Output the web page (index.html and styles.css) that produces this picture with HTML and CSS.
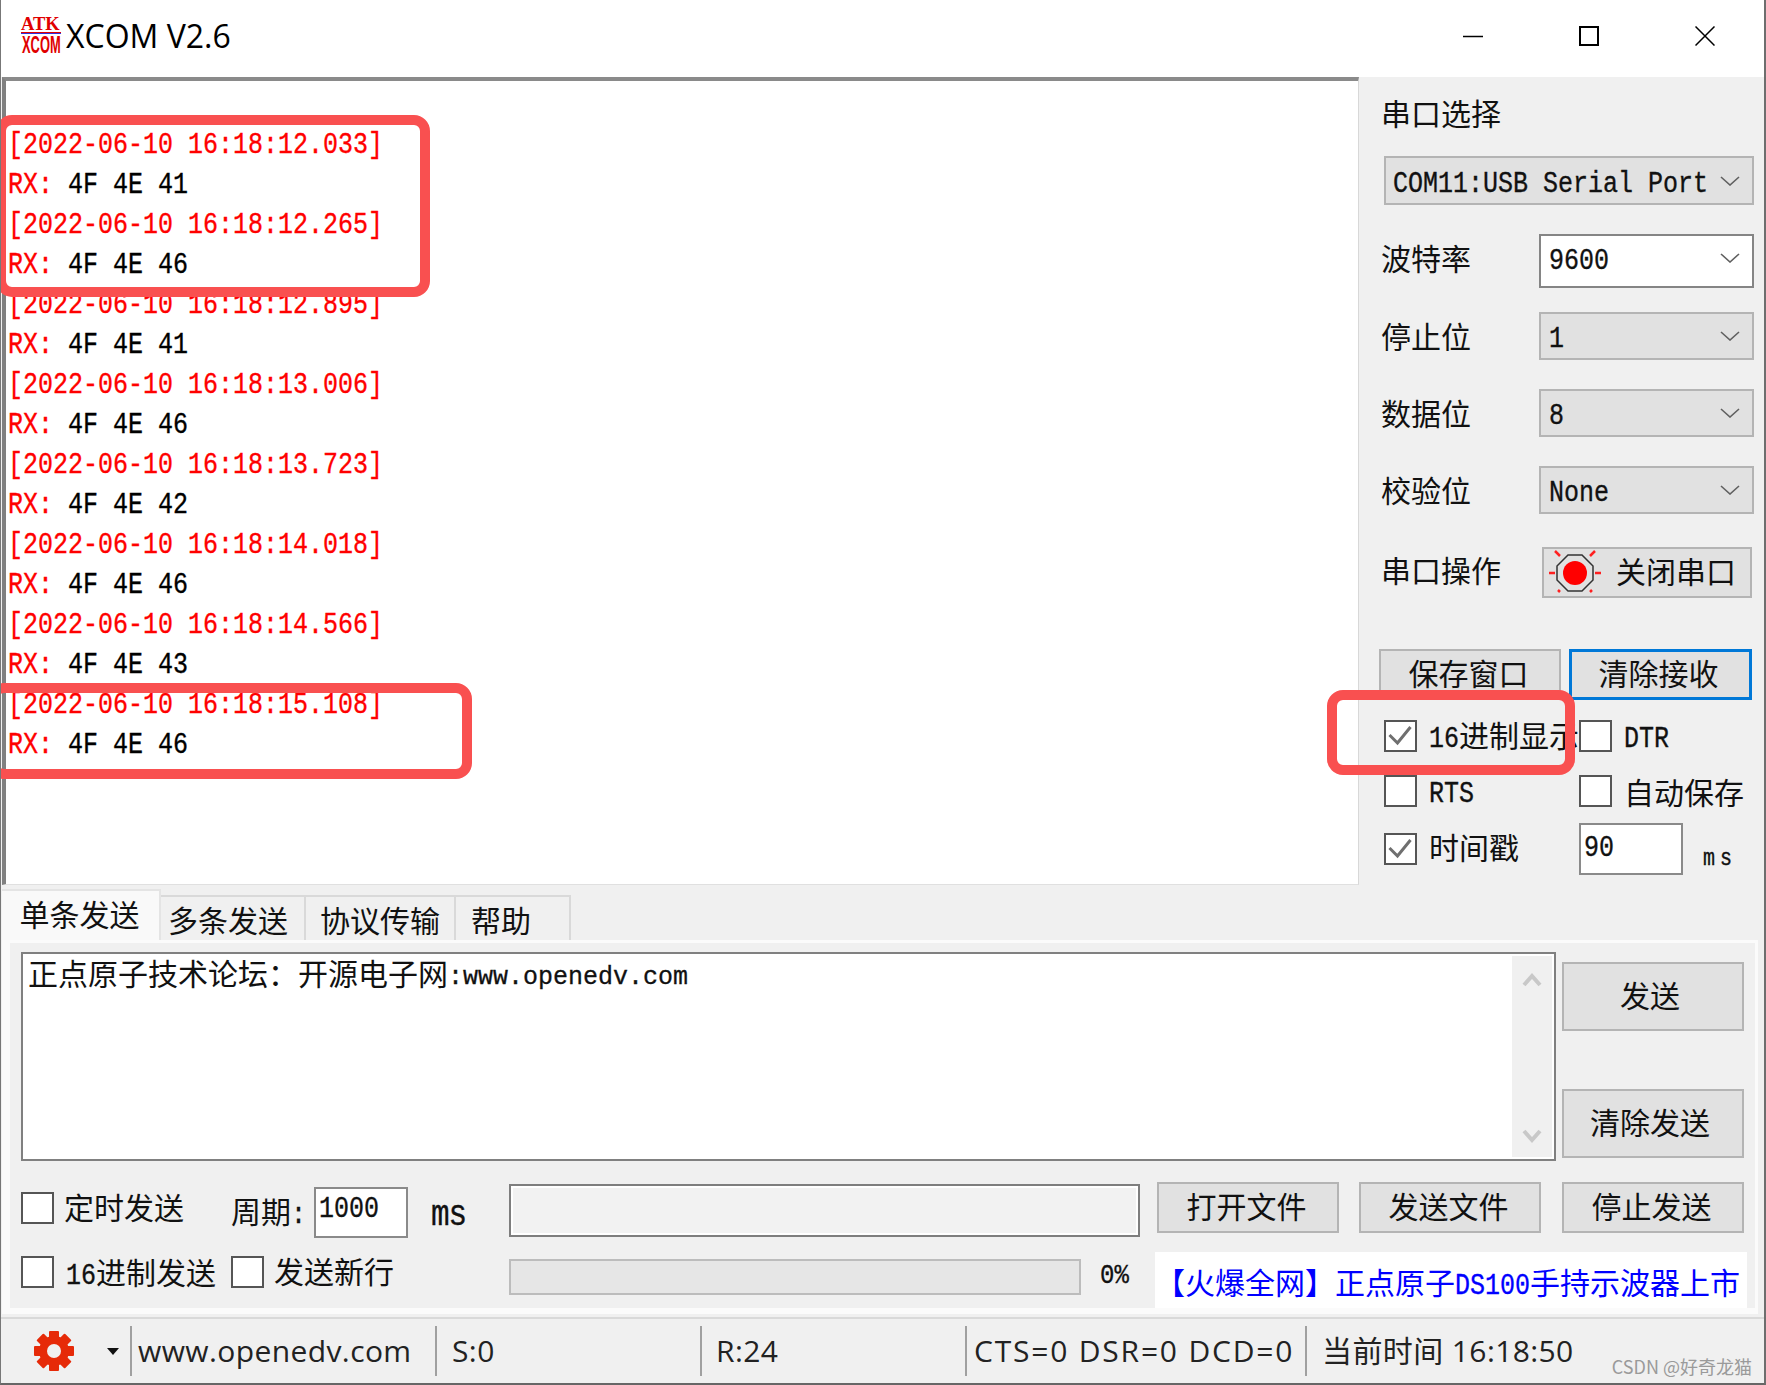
FILE: index.html
```html
<!DOCTYPE html>
<html lang="zh">
<head>
<meta charset="utf-8">
<title>XCOM V2.6</title>
<link rel="stylesheet" href="styles.css">
</head>
<body>
<div class="window">
  <header class="titlebar">
    <svg class="logo" width="42" height="44" viewBox="0 -3 42 44">
      <text x="1" y="13" class="logo-top">ATK</text>
      <rect x="1" y="15" width="40" height="1" fill="#e00000"/>
      <rect x="1" y="16" width="40" height="1" fill="#3030e0"/>
      <text transform="translate(2 36) scale(.68 1.25)" class="logo-bot">XCOM</text>
    </svg>
    <span class="app-title">XCOM V2.6</span>
    <div class="controls">
      <svg width="20" height="20" viewBox="0 0 20 20"><path d="M0 10.5H20" stroke="#000" stroke-width="1.5"/></svg>
      <svg width="20" height="20" viewBox="0 0 20 20"><rect x="1" y="1" width="18" height="18" fill="none" stroke="#000" stroke-width="2"/></svg>
      <svg width="20" height="20" viewBox="0 0 20 20"><path d="M.5.5L19.5 19.5M19.5.5L.5 19.5" stroke="#000" stroke-width="1.5"/></svg>
    </div>
  </header>

  <main class="main">
    <section class="log">
      <div class="line time">[2022-06-10 16:18:12.033]</div>
      <div class="line"><span class="red">RX:</span> 4F 4E 41</div>
      <div class="line time">[2022-06-10 16:18:12.265]</div>
      <div class="line"><span class="red">RX:</span> 4F 4E 46</div>
      <div class="line time">[2022-06-10 16:18:12.895]</div>
      <div class="line"><span class="red">RX:</span> 4F 4E 41</div>
      <div class="line time">[2022-06-10 16:18:13.006]</div>
      <div class="line"><span class="red">RX:</span> 4F 4E 46</div>
      <div class="line time">[2022-06-10 16:18:13.723]</div>
      <div class="line"><span class="red">RX:</span> 4F 4E 42</div>
      <div class="line time">[2022-06-10 16:18:14.018]</div>
      <div class="line"><span class="red">RX:</span> 4F 4E 46</div>
      <div class="line time">[2022-06-10 16:18:14.566]</div>
      <div class="line"><span class="red">RX:</span> 4F 4E 43</div>
      <div class="line time">[2022-06-10 16:18:15.108]</div>
      <div class="line"><span class="red">RX:</span> 4F 4E 46</div>
    </section>

    <aside class="panel">
      <div class="p-title">串口选择</div>
      <div class="select select-wide r-com"><span class="mono">COM11:USB Serial Port</span><svg class="chev" viewBox="0 0 20 10"><path d="M1 1L10 9L19 1"/></svg></div>

      <div class="field r-rate"><span class="field-label label-up">波特率</span>
        <div class="select select-white"><span class="mono">9600</span><svg class="chev" viewBox="0 0 20 10"><path d="M1 1L10 9L19 1"/></svg></div></div>
      <div class="field r-stop"><span class="field-label">停止位</span>
        <div class="select"><span class="mono">1</span><svg class="chev" viewBox="0 0 20 10"><path d="M1 1L10 9L19 1"/></svg></div></div>
      <div class="field r-data"><span class="field-label">数据位</span>
        <div class="select"><span class="mono">8</span><svg class="chev" viewBox="0 0 20 10"><path d="M1 1L10 9L19 1"/></svg></div></div>
      <div class="field r-parity"><span class="field-label">校验位</span>
        <div class="select"><span class="mono">None</span><svg class="chev" viewBox="0 0 20 10"><path d="M1 1L10 9L19 1"/></svg></div></div>

      <div class="field r-op"><span class="field-label label-op">串口操作</span>
        <button class="btn btn-led">
          <svg class="led" width="52" height="48" viewBox="0 0 52 48">
            <path d="M19 6H33L44 17V31L33 42H19L8 31V17Z" fill="none" stroke="#333" stroke-width="1.5"/>
            <circle cx="26" cy="24" r="12" fill="#ff0000"/>
            <path d="M0 24H6M46 24H52M6 2L11 7M46 2L41 7M9 41L11 43M43 41L41 43" stroke="#ff2020" stroke-width="2.5" fill="none"/>
          </svg>
          <span>关闭串口</span>
        </button>
      </div>

      <div class="btn-row">
        <button class="btn btn-save">保存窗口</button>
        <button class="btn btn-focus">清除接收</button>
      </div>

      <div class="chk-row r-c1">
        <span class="box"><svg viewBox="0 0 28 28"><path d="M3 13L11 21L24 5"/></svg></span>
        <span class="chk-label"><span class="mono">16</span>进制显示</span>
        <span class="box"></span>
        <span class="chk-label2"><span class="mono">DTR</span></span>
      </div>
      <div class="chk-row r-c2">
        <span class="box"></span>
        <span class="chk-label"><span class="mono">RTS</span></span>
        <span class="box"></span>
        <span class="chk-label2">自动保存</span>
      </div>
      <div class="chk-row r-c3">
        <span class="box"><svg viewBox="0 0 28 28"><path d="M3 13L11 21L24 5"/></svg></span>
        <span class="chk-label label-stamp">时间戳</span>
        <span class="input input-ms"><span class="mono">90</span></span>
        <span class="mono ms-small">ms</span>
      </div>
    </aside>
  </main>

  <nav class="tabs">
    <span class="tab tab-active">单条发送</span>
    <span class="tab t2">多条发送</span>
    <span class="tab t3">协议传输</span>
    <span class="tab t4">帮助</span>
  </nav>

  <section class="pane">
    <div class="send-top">
      <div class="textarea">
        <div class="ta-text">正点原子技术论坛：开源电子网<span class="mono">:www.openedv.com</span></div>
        <div class="scroll">
          <svg width="20" height="14" viewBox="0 0 20 14"><path d="M2 12L10 3L18 12"/></svg>
          <svg width="20" height="14" viewBox="0 0 20 14"><path d="M2 2L10 11L18 2"/></svg>
        </div>
      </div>
      <div class="side">
        <button class="btn btn-side">发送</button>
        <button class="btn btn-side">清除发送</button>
      </div>
    </div>

    <div class="row row2">
      <span class="box b-timer"></span>
      <span class="lbl l-timer">定时发送</span>
      <span class="lbl l-period">周期<span class="mono">:</span></span>
      <span class="input i-period"><span class="mono">1000</span></span>
      <span class="mono big-ms">ms</span>
      <span class="file"></span>
      <button class="btn btn-file b1">打开文件</button>
      <button class="btn btn-file b2">发送文件</button>
      <button class="btn btn-file b3">停止发送</button>
    </div>

    <div class="row row3">
      <span class="box b-hex"></span>
      <span class="lbl l-hex"><span class="mono">16</span>进制发送</span>
      <span class="box b-nl"></span>
      <span class="lbl l-nl">发送新行</span>
      <span class="progress"></span>
      <span class="mono pct">0%</span>
      <span class="ad">【火爆全网】正点原子<span class="mono">DS100</span>手持示波器上市</span>
    </div>
  </section>

  <footer class="status">
    <div class="cell c-gear">
      <svg class="gear" width="42" height="42" viewBox="0 0 42 42">
        <g fill="#e62a08">
          <circle cx="21" cy="21" r="15"/>
          <rect x="16" y="1" width="10" height="40" rx="1"/>
          <rect x="16" y="1" width="10" height="40" rx="1" transform="rotate(45 21 21)"/>
          <rect x="16" y="1" width="10" height="40" rx="1" transform="rotate(90 21 21)"/>
          <rect x="16" y="1" width="10" height="40" rx="1" transform="rotate(135 21 21)"/>
        </g>
        <circle cx="21" cy="21" r="7" fill="#f0f0f0"/>
      </svg>
      <svg class="caret" width="12" height="7" viewBox="0 0 12 7"><path d="M0 0H12L6 7Z" fill="#111"/></svg>
    </div>
    <i class="sep"></i>
    <div class="cell c-site">www.openedv.com</div>
    <i class="sep"></i>
    <div class="cell c-s">S:0</div>
    <i class="sep"></i>
    <div class="cell c-r">R:24</div>
    <i class="sep"></i>
    <div class="cell c-cts">CTS=0 DSR=0 DCD=0</div>
    <i class="sep"></i>
    <div class="cell c-time">当前时间 16:18:50</div>
  </footer>

  <div class="mark m1"></div>
  <div class="mark m2"></div>
  <div class="mark m3"></div>
  <div class="watermark">CSDN @好奇龙猫</div>
</div>
</body>
</html>
```
FILE: styles.css
```css
* { box-sizing: border-box; }
html, body { margin: 0; padding: 0; background: #fff; }
body { font-family: "Noto Sans CJK SC", "Noto Sans", sans-serif; font-size: 30px; line-height: 36px; color: #111; overflow: hidden; }

.window { position: relative; width: 1766px; height: 1385px; display: flex; flex-direction: column; background: #f0f0f0; border-left: 1px solid #777; border-right: 2px solid #6e6e6e; border-bottom: 2px solid #666; overflow: hidden; }

.mono { display: inline-block; font-family: "Liberation Mono", monospace; font-size: 25px; line-height: 30px; transform: translateY(4px) scaleY(1.18); white-space: pre; -webkit-text-stroke: .3px currentColor; }
.chk-label .mono, .chk-label2 .mono, .lbl .mono, .ad .mono { transform: translateY(-1px) scaleY(1.18); }

/* title bar */
.titlebar { height: 77px; flex: none; display: flex; align-items: center; background: #fff; padding: 0 49px 5px 19px; }
.logo { flex: none; }
.logo-top { font-family: "Liberation Serif", serif; font-weight: 700; font-size: 18.5px; fill: #e00000; }
.logo-bot { font-family: "Liberation Sans", sans-serif; font-weight: 700; font-size: 19px; fill: #e00000; }
.app-title { font-family: "Open Sans", sans-serif; font-size: 32px; line-height: 38px; margin-left: 4px; color: #000; }
.controls { margin-left: auto; display: flex; gap: 96px; }
.controls svg { display: block; }

/* main */
.main { height: 812px; flex: none; display: flex; }
.log { width: 1357px; height: 808px; margin-left: 1px; flex: none; background: #fff; border-left: 4px solid #808080; border-top: 4px solid #8a8a8a; border-right: 1px solid #d8d8d8; border-bottom: 1px solid #e0e0e0; padding: 45px 0 0 2px; overflow: hidden; }
.line { height: 40px; font-family: "Liberation Mono", monospace; font-size: 25px; line-height: 40px; color: #000; white-space: pre; transform: scaleY(1.18); -webkit-text-stroke: .3px currentColor; }
.time, .red { color: #ff0000; }

/* right panel */
.panel { flex: 1; padding-left: 22px; display: flex; flex-direction: column; background: #f0f0f0; margin-left: 3px; }
.p-title { margin-top: 17px; height: 36px; line-height: 36px; margin-left: -3px; }
.select { width: 215px; height: 48px; flex: none; display: flex; align-items: center; justify-content: space-between; padding: 0 12px 0 8px; background: #e1e1e1; border: 2px solid #b4b4b4; }
.select-wide { width: 370px; height: 49px; margin-top: 26px; padding-left: 7px; }
.select-white { height: 54px; background: #fff; border-color: #858585; padding-bottom: 6px; }
.chev { width: 20px; height: 10px; flex: none; }
.chev path { fill: none; stroke: #606060; stroke-width: 1.6; }
.field { display: flex; align-items: center; }
.field-label { width: 158px; margin: 0 0 2px -3px; flex: none; }
.label-up { margin-bottom: 9px; }
.label-op { margin-bottom: 7px; }
.r-rate { margin-top: 29px; }
.r-stop { margin-top: 24px; }
.r-data { margin-top: 29px; }
.r-parity { margin-top: 29px; }
.r-op { margin-top: 33px; }

button { font: inherit; color: inherit; padding: 0; cursor: default; }
.btn { display: flex; align-items: center; justify-content: center; background: #e1e1e1; border: 2px solid #b4b4b4; padding-bottom: 5px; }
.btn-led { width: 210px; height: 51px; margin-left: 3px; justify-content: flex-start; padding-left: 5px; gap: 15px; }
.led { flex: none; margin-bottom: -5px; }
.btn-row { display: flex; margin-top: 51px; margin-left: -5px; gap: 8px; }
.btn-save { width: 182px; height: 51px; padding-right: 3px; }
.btn-focus { width: 183px; height: 51px; border: 3px solid #0078d7; padding-right: 4px; }

.chk-row { display: flex; align-items: center; }
.box { width: 33px; height: 32px; flex: none; background: #fff; border: 2px solid #555; display: block; }
.box svg { display: block; width: 100%; height: 100%; }
.box path { fill: none; stroke: #6f6f6f; stroke-width: 3; }
.chk-label { width: 150px; margin-left: 12px; flex: none; white-space: nowrap; }
.label-stamp { margin-bottom: 6px; }
.chk-label2 { margin-left: 12px; white-space: nowrap; }
.r-c1 { margin-top: 20px; height: 32px; }
.r-c2 { margin-top: 23px; height: 32px; }
.r-c3 { margin-top: 16px; height: 52px; }
.input { display: block; background: #fff; border: 2px solid #8a8a8a; flex: none; padding-left: 3px; }
.input .mono { display: block; }
.input-ms { width: 104px; height: 52px; }
.input-ms .mono { margin-top: 5px; }
.ms-small { margin-left: 20px; margin-top: 12px; font-size: 20px; letter-spacing: 5px; }

/* tabs */
.tabs { height: 51px; flex: none; display: flex; align-items: flex-end; }
.tab { height: 45px; display: flex; align-items: center; justify-content: center; background: #f0f0f0; border: 2px solid #d9d9d9; border-left-width: 0; border-bottom: 0; }
.tab-active { width: 159px; height: 51px; background: #f9f9f9; border-color: #e4e4e4; padding: 0 2px 5px 0; margin-left: 1px; }
.t2 { width: 145px; padding-right: 9px; }
.t3 { width: 150px; }
.t4 { width: 115px; justify-content: flex-start; padding-left: 15px; }

/* pane */
.pane { height: 374px; width: 1756px; flex: none; margin-left: 1px; background: #f0f0f0; border: solid #fbfbfb; border-width: 3px 3px 6px 8px; padding: 9px 0 0 11px; }
.send-top { display: flex; height: 209px; }
.textarea { width: 1535px; height: 209px; flex: none; display: flex; background: #fff; border: 2px solid #808080; padding: 2px; }
.ta-text { flex: 1; padding-left: 3px; line-height: 33px; white-space: nowrap; }
.ta-text .mono { transform: translateY(-1px) scaleY(1.05); }
.scroll { width: 40px; flex: none; background: #f0f0f0; display: flex; flex-direction: column; justify-content: space-between; align-items: center; padding: 17px 0 14px; }
.scroll path { fill: none; stroke: #c8c8c8; stroke-width: 4; }
.side { width: 182px; height: 196px; margin: 10px 0 0 6px; flex: none; display: flex; flex-direction: column; justify-content: space-between; }
.btn-side { height: 69px; padding-right: 6px; }

.row { display: flex; align-items: flex-start; height: 56px; }
.row2 { margin-top: 21px; }
.row3 { margin-top: 14px; }
.lbl { white-space: nowrap; flex: none; }
.b-timer { margin-top: 10px; }
.l-timer { width: 120px; margin: 6px 0 0 10px; }
.l-period { width: 75px; margin: 10px 0 0 47px; }
.i-period { width: 94px; height: 51px; margin: 5px 0 0 8px; }
.i-period .mono { margin-top: 2px; }
.big-ms { margin: 15px 0 0 23px; width: 39px; font-size: 31px; letter-spacing: -1px; }
.file { width: 631px; height: 53px; margin: 2px 0 0 39px; flex: none; background: #f2f2f2; border: 2px solid #7e7e7e; box-shadow: inset 0 0 0 2px #fff; }
.btn-file { width: 182px; height: 51px; flex: none; padding-right: 3px; }
.b1 { margin-left: 17px; }
.b2 { margin-left: 20px; }
.b3 { margin-left: 21px; }

.b-hex { margin-top: 4px; }
.l-hex { width: 150px; margin: 1px 0 0 12px; }
.b-nl { margin: 4px 0 0 15px; }
.l-nl { width: 120px; margin: 0 0 0 10px; }
.progress { width: 572px; height: 36px; margin: 7px 0 0 115px; flex: none; background: #e6e6e6; border: 2px solid #bcbcbc; }
.pct { margin: 5px 0 0 19px; width: 32px; font-size: 24px; }
.ad { width: 592px; height: 56px; margin-left: 23px; flex: none; background: #fff; color: #0000ff; line-height: 58px; white-space: nowrap; }

/* status */
.status { flex: 1; display: flex; align-items: center; background: #f0f0f0; border-top: 2px solid #d9d9d9; margin-top: 3px; font-family: "Open Sans", "Noto Sans CJK SC", sans-serif; font-size: 30px; line-height: 44px; letter-spacing: .4px; color: #222; }
.sep { width: 2px; height: 50px; background: #a0a0a0; flex: none; }
.cell { display: flex; align-items: center; white-space: nowrap; }
.c-gear { width: 129px; padding-left: 32px; }
.gear { flex: none; }
.caret { margin-left: 32px; flex: none; }
.c-site { width: 303px; padding-left: 6px; }
.c-s { width: 263px; padding-left: 15px; }
.c-r { width: 263px; padding-left: 14px; }
.c-cts { width: 338px; padding-left: 7px; letter-spacing: 1.8px; }
.c-time { padding-left: 15px; }

/* annotations */
.mark { position: absolute; border: 10px solid #f95050; border-radius: 16px; pointer-events: none; }
.m1 { left: -5px; top: 115px; width: 434px; height: 182px; }
.m2 { left: -13px; top: 683px; width: 484px; height: 96px; }
.m3 { left: 1326px; top: 690px; width: 248px; height: 85px; }
.watermark { position: absolute; right: 12px; top: 1354px; font-family: "Noto Sans CJK SC", sans-serif; font-size: 18px; line-height: 24px; color: #9a9a9a; }
```
